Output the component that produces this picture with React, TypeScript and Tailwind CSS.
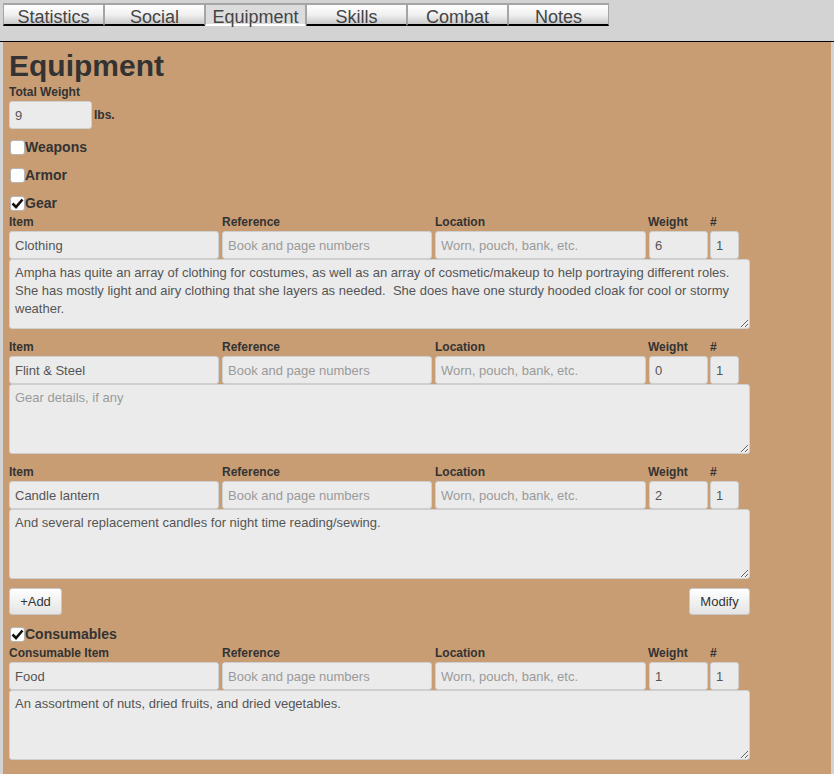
import React from 'react';

const TABS = ['Statistics', 'Social', 'Equipment', 'Skills', 'Combat', 'Notes'];

interface GearItem {
    name: string
    weight: string
    count: string
    details: string
}

const gear: GearItem[] = [
    {
        name: 'Clothing',
        weight: '6',
        count: '1',
        details: 'Ampha has quite an array of clothing for costumes, as well as an array of cosmetic/makeup to help portraying different roles. She has mostly light and airy clothing that she layers as needed.  She does have one sturdy hooded cloak for cool or stormy weather.',
    },
    { name: 'Flint & Steel', weight: '0', count: '1', details: '' },
    { name: 'Candle lantern', weight: '2', count: '1', details: 'And several replacement candles for night time reading/sewing.' },
];

const consumables: GearItem[] = [
    { name: 'Food', weight: '1', count: '1', details: 'An assortment of nuts, dried fruits, and dried vegetables.' },
];

const inputCls = 'h-[28px] rounded-[3px] border border-[#cfcfcf] bg-[#ebebeb] px-[5px] text-[13px] text-[#555] placeholder:text-[#9a9a9a] outline-none';

const Check = ({ checked, label }: { checked: boolean, label: string }) => (
    <div className="flex h-[25px] items-center pt-[2px]">
        <span className="ml-[1px] flex h-[15px] w-[15px] items-center justify-center rounded-[3px] border border-[#b5b5b5] bg-white">
            { checked &&
                <svg width="13" height="11" viewBox="0 0 13 11">
                    <path d="M1.5 5.5 L5 9 L11.5 1.5" fill="none" stroke="#111" strokeWidth="2.6"/>
                </svg> }
        </span>
        <span className="text-[14px] font-bold text-[#333]">{ label }</span>
    </div>
);

const Group = ({ item, first }: { item: GearItem, first: string }) => (
    <div className="mb-[11px]">
        <div className="flex h-[14px] text-[12px] leading-[14px] font-bold text-[#333]">
            <span className="w-[213px]">{ first }</span>
            <span className="w-[213px]">Reference</span>
            <span className="w-[213px]">Location</span>
            <span className="w-[62px]">Weight</span>
            <span>#</span>
        </div>
        <div className="mt-[2px] flex">
            <input className={ inputCls + ' w-[210px]' } defaultValue={ item.name }/>
            <input className={ inputCls + ' ml-[3px] w-[210px]' } placeholder="Book and page numbers"/>
            <input className={ inputCls + ' ml-[3px] w-[211px]' } placeholder="Worn, pouch, bank, etc."/>
            <input className={ inputCls + ' ml-[3px] w-[59px]' } defaultValue={ item.weight }/>
            <input className={ inputCls + ' ml-[2px] w-[29px]' } defaultValue={ item.count }/>
        </div>
        <textarea className="block h-[70px] w-[741px] rounded-[3px] border border-[#cfcfcf] bg-[#ebebeb] px-[5px] py-[4px] text-[13px] leading-[18px] text-[#555] placeholder:text-[#9a9a9a] outline-none"
                  defaultValue={ item.details }
                  placeholder="Gear details, if any"/>
    </div>
);

const Button = ({ label, width }: { label: string, width: string }) => (
    <button className={ 'h-[27px] rounded-[3px] border border-[#c8c8c8] bg-gradient-to-b from-white to-[#e4e4e4] text-[13px] text-[#333] ' + width }>
        { label }
    </button>
);

export default function App() {
    return (
        <div className="min-h-screen bg-[#d3d3d3] font-['Liberation_Sans',Arial,sans-serif]">
            <div className="h-[42px] border-b border-black pt-[3px] pl-[3px]">
                <div className="flex">
                    { TABS.map(tab => {
                        const active = tab === 'Equipment';
                        return (
                            <div key={ tab }
                                 className={ 'flex h-[23px] w-[101px] items-center justify-center border-x border-t-2 border-[#a5a5a5] border-b-2 pt-[4px] text-[18px] leading-none text-[#444] '
                                     + (active ? 'border-b-white bg-[#dcdcdc]' : 'border-b-black bg-gradient-to-b from-white via-[#f1f1f1] to-[#c9c9c9]') }>
                                { tab }
                            </div>
                        );
                    }) }
                </div>
            </div>

            <div className="mx-[3px] bg-[#c89d74] px-[6px] pt-[6px] pb-[10px]">
                <h2 className="h-[36px] text-[30px] leading-[36px] font-bold text-[#333]">Equipment</h2>
                <div className="mt-[1px] h-[14px] text-[12px] leading-[14px] font-bold text-[#333]">Total Weight</div>
                <div className="mt-[2px] flex items-center">
                    <input className={ inputCls + ' w-[83px]' } defaultValue="9"/>
                    <span className="ml-[2px] text-[12px] font-bold text-[#333]">lbs.</span>
                </div>

                <div className="mt-[5px] flex flex-col gap-[3px]">
                    <Check checked={ false } label="Weapons"/>
                    <Check checked={ false } label="Armor"/>
                    <div>
                        <Check checked={ true } label="Gear"/>
                        { gear.map(item => <Group key={ item.name } item={ item } first="Item"/>) }
                        <div className="-mt-[2px] flex w-[741px] justify-between">
                            <Button label="+Add" width="w-[53px]"/>
                            <Button label="Modify" width="w-[61px]"/>
                        </div>
                    </div>
                    <div className="mt-[3px]">
                        <Check checked={ true } label="Consumables"/>
                        { consumables.map(item => <Group key={ item.name } item={ item } first="Consumable Item"/>) }
                    </div>
                </div>
            </div>
        </div>
    );
}
